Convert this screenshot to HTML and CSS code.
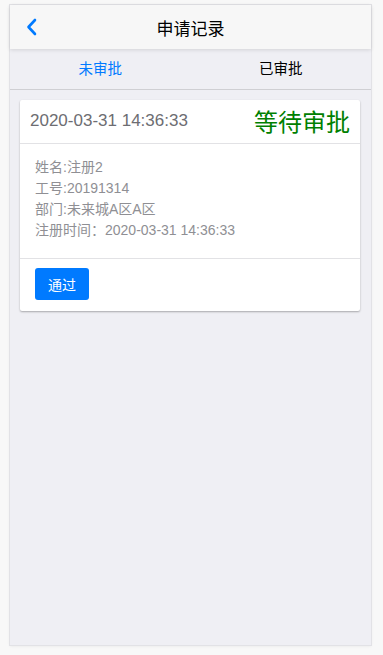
FILE: index.html
```html
<!DOCTYPE html>
<html lang="zh">
<head>
<meta charset="utf-8">
<link rel="stylesheet" href="styles.css">
</head>
<body>
<div class="frame">
  <header class="bar">
    <svg class="back" width="12" height="18" viewBox="0 0 12 18"><polyline points="9,2 2.5,9 9,16" fill="none" stroke="#007aff" stroke-width="2.6" stroke-linecap="round" stroke-linejoin="round"/></svg>
    <h1 class="title">申请记录</h1>
  </header>
  <nav class="tabs">
    <div class="tab active">未审批</div>
    <div class="tab">已审批</div>
  </nav>
  <main class="content">
    <div class="card">
      <div class="card-header">
        <span class="time">2020-03-31 14:36:33</span>
        <span class="status">等待审批</span>
      </div>
      <div class="card-body">
        <p>姓名:注册2</p>
        <p>工号:20191314</p>
        <p>部门:未来城A区A区</p>
        <p>注册时间：2020-03-31 14:36:33</p>
      </div>
      <div class="card-footer">
        <button class="btn">通过</button>
      </div>
    </div>
  </main>
</div>
</body>
</html>
```
FILE: styles.css
```css
* { box-sizing: border-box; }
html, body { margin: 0; padding: 0; }
body {
  background: #f8f8f8;
  font-family: "Liberation Sans", Arial, "Noto Sans CJK SC", sans-serif;
  padding: 5px 12px 10px 10px;
}
.frame {
  width: 361px;
  height: 640px;
  background: #efeff4;
  box-shadow: 0 0 0 1px #e2e2e6, 0 1px 3px rgba(0,0,0,.08);
  display: flex;
  flex-direction: column;
}
.bar {
  height: 44px;
  background: #f7f7f7;
  position: relative;
  z-index: 2;
  box-shadow: 0 1px 4px rgba(0,0,0,.12);
  display: flex;
  align-items: center;
  justify-content: center;
}
.back {
  position: absolute;
  left: 16px;
  top: 13px;
}
.title {
  margin: 0;
  font-size: 17px;
  font-weight: normal;
  color: #000;
}
.tabs {
  height: 41px;
  padding-bottom: 3px;
  display: flex;
  background: #efeff4;
  border-bottom: 1px solid #cfcfd3;
}
.tab {
  flex: 1;
  display: flex;
  align-items: center;
  justify-content: center;
  font-size: 14.5px;
  color: #000;
}
.tab.active { color: #007aff; }
.content {
  flex: 1;
  padding: 10px 11px 10px 10px;
}
.card {
  background: #fff;
  border-radius: 2px;
  box-shadow: 0 1px 2px rgba(0,0,0,.3);
}
.card-header {
  height: 44px;
  padding: 0 10px 2px;
  display: flex;
  align-items: center;
  justify-content: space-between;
  border-bottom: 1px solid #e2e2e5;
}
.time {
  font-size: 17px;
  color: #6d6d72;
}
.status {
  font-size: 24px;
  color: #008000;
}
.card-body {
  padding: 13px 15px 17px;
  border-bottom: 1px solid #e2e2e5;
}
.card-body p {
  margin: 0;
  font-size: 14px;
  line-height: 21px;
  color: #8f8f94;
}
.card-footer {
  padding: 9px 15px 11px;
}
.btn {
  width: 54px;
  height: 32px;
  border: none;
  border-radius: 3px;
  background: #007aff;
  color: #fff;
  font-family: inherit;
  font-size: 14px;
  padding: 0;
}
```
